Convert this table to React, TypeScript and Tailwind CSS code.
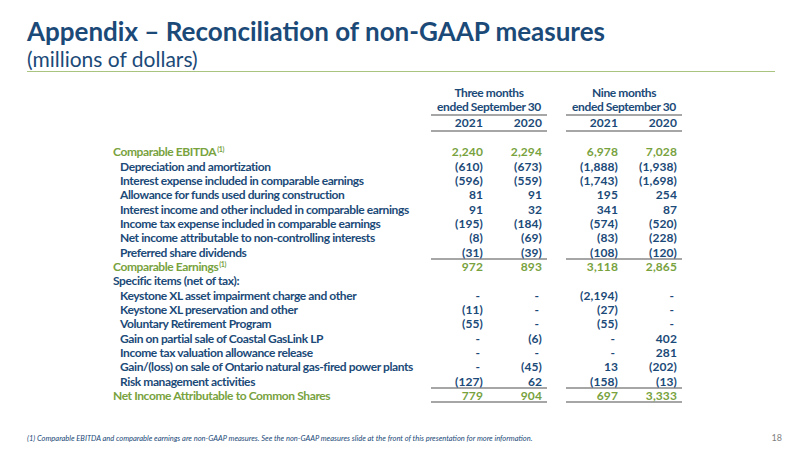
import React from "react";

type Row = {
  label: string;
  values?: string[];
  kind: "green" | "head" | "item";
  sup?: boolean;
  lineBelow?: boolean;
};

const rows: Row[] = [
  { label: "Comparable EBITDA", sup: true, kind: "green", values: ["2,240", "2,294", "6,978", "7,028"] },
  { label: "Depreciation and amortization", kind: "item", values: ["(610)", "(673)", "(1,888)", "(1,938)"] },
  { label: "Interest expense included in comparable earnings", kind: "item", values: ["(596)", "(559)", "(1,743)", "(1,698)"] },
  { label: "Allowance for funds used during construction", kind: "item", values: ["81", "91", "195", "254"] },
  { label: "Interest income and other included in comparable earnings", kind: "item", values: ["91", "32", "341", "87"] },
  { label: "Income tax expense included in comparable earnings", kind: "item", values: ["(195)", "(184)", "(574)", "(520)"] },
  { label: "Net income attributable to non-controlling interests", kind: "item", values: ["(8)", "(69)", "(83)", "(228)"] },
  { label: "Preferred share dividends", kind: "item", values: ["(31)", "(39)", "(108)", "(120)"], lineBelow: true },
  { label: "Comparable Earnings", sup: true, kind: "green", values: ["972", "893", "3,118", "2,865"] },
  { label: "Specific items (net of tax):", kind: "head" },
  { label: "Keystone XL asset impairment charge and other", kind: "item", values: ["-", "-", "(2,194)", "-"] },
  { label: "Keystone XL preservation and other", kind: "item", values: ["(11)", "-", "(27)", "-"] },
  { label: "Voluntary Retirement Program", kind: "item", values: ["(55)", "-", "(55)", "-"] },
  { label: "Gain on partial sale of Coastal GasLink LP", kind: "item", values: ["-", "(6)", "-", "402"] },
  { label: "Income tax valuation allowance release", kind: "item", values: ["-", "-", "-", "281"] },
  { label: "Gain/(loss) on sale of Ontario natural gas-fired power plants", kind: "item", values: ["-", "(45)", "13", "(202)"] },
  { label: "Risk management activities", kind: "item", values: ["(127)", "62", "(158)", "(13)"], lineBelow: true },
  { label: "Net Income Attributable to Common Shares", kind: "green", values: ["779", "904", "697", "3,333"], lineBelow: true },
];

function Cell({ v, w }: { v?: string; w: string }) {
  const dash = v === "-";
  return (
    <div className={`${w} text-right leading-[12px] tracking-[0.1px] ${dash ? "pr-[3px]" : ""}`}>{v}</div>
  );
}

function Group({ a, b, line }: { a?: string; b?: string; line?: boolean }) {
  return (
    <div
      className={`flex w-[116px] h-[14.35px] items-center ${
        line ? "border-b-2 border-[#a6a6a6] pt-[2px]" : ""
      }`}
    >
      <Cell v={a} w="w-[52px]" />
      <Cell v={b} w="w-[59px]" />
    </div>
  );
}

export default function App() {
  return (
    <div className="w-[800px] h-[450px] bg-white relative overflow-hidden font-['Lato',sans-serif] text-[#1b4a78]">
      <div className="pl-[27px] pt-[16px] pr-[25px]">
        <h1 className="text-[26px] font-bold leading-[30px]">
          Appendix – Reconciliation of non-GAAP measures
        </h1>
        <div className="text-[21px] leading-[25px]">(millions of dollars)</div>
        <div className="h-[1px] bg-[#a9c47f]" />
      </div>

      <div className="pl-[113px] pt-[14px] text-[12px] font-bold tracking-[-0.4px]">
        {/* header */}
        <div className="flex">
          <div className="w-[318px]" />
          <div className="w-[116px] text-center leading-[13.5px] border-b-2 border-[#a6a6a6] pb-[1px]">
            <div>Three months</div>
            <div>ended September 30</div>
          </div>
          <div className="w-[19px]" />
          <div className="w-[116px] text-center leading-[13.5px] border-b-2 border-[#a6a6a6] pb-[1px]">
            <div>Nine months</div>
            <div>ended September 30</div>
          </div>
        </div>
        <div className="flex h-[16px] items-center">
          <div className="w-[318px]" />
          <div className="flex w-[116px] h-full items-center border-b-2 border-[#a6a6a6]">
            <Cell v="2021" w="w-[52px]" />
            <Cell v="2020" w="w-[59px]" />
          </div>
          <div className="w-[19px]" />
          <div className="flex w-[116px] h-full items-center border-b-2 border-[#a6a6a6]">
            <Cell v="2021" w="w-[52px]" />
            <Cell v="2020" w="w-[59px]" />
          </div>
        </div>

        <div className="mt-[13px]">
          {rows.map((r, i) => {
            const green = r.kind === "green";
            return (
              <div
                key={i}
                className={`flex h-[14.35px] items-center ${green ? "text-[#78a23e]" : ""}`}
              >
                <div className={`w-[318px] leading-[12px] whitespace-nowrap ${r.kind === "item" ? "pl-[7px]" : ""}`}>
                  {r.label}
                  {r.sup && <sup className="text-[7px] ml-[1px] top-[-4px]">(1)</sup>}
                </div>
                <Group a={r.values?.[0]} b={r.values?.[1]} line={r.lineBelow} />
                <div className="w-[19px]" />
                <Group a={r.values?.[2]} b={r.values?.[3]} line={r.lineBelow} />
              </div>
            );
          })}
        </div>
      </div>

      <div className="absolute left-[27px] bottom-[6px] text-[7.5px] italic">
        (1) Comparable EBITDA and comparable earnings are non-GAAP measures. See the non-GAAP measures slide at the front of this presentation for more information.
      </div>
      <div className="absolute right-[18px] bottom-[6px] text-[9px] text-[#7f7f7f]">18</div>
    </div>
  );
}
